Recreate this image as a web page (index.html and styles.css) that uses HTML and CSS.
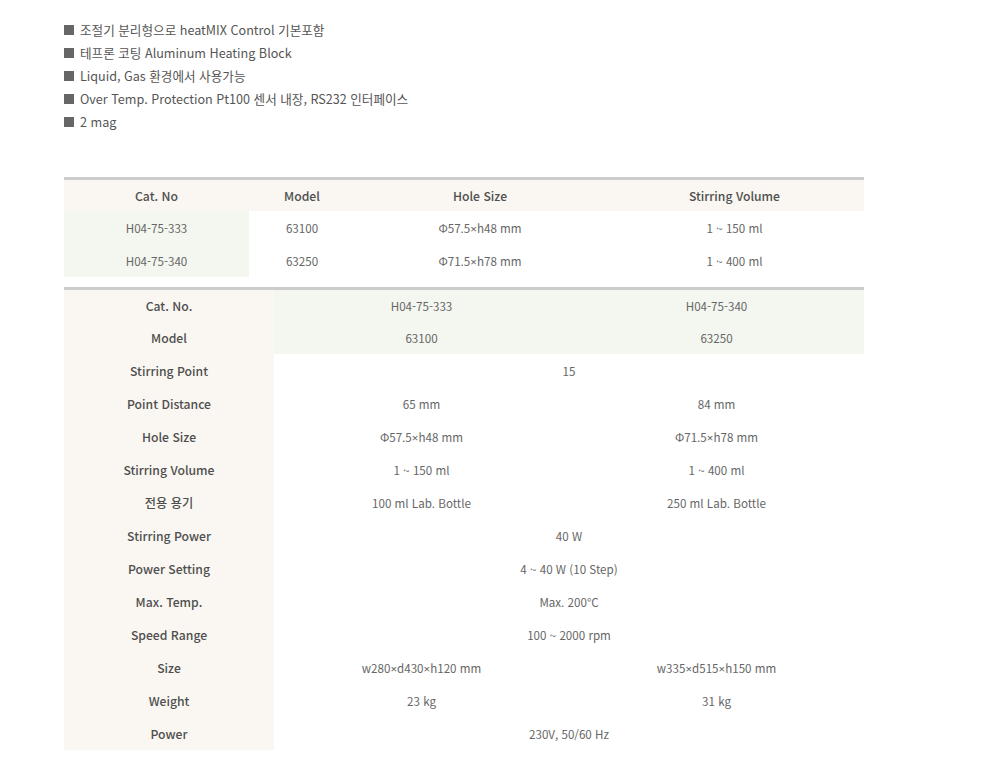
FILE: index.html
```html
<!DOCTYPE html>
<html lang="ko">
<head>
<meta charset="utf-8">
<title>heatMIX</title>
<link rel="stylesheet" href="styles.css">
</head>
<body>
<div class="page">
  <ul class="features">
    <li><span class="sq"></span>조절기 분리형으로 heatMIX Control 기본포함</li>
    <li><span class="sq"></span>테프론 코팅 Aluminum Heating Block</li>
    <li><span class="sq"></span>Liquid, Gas 환경에서 사용가능</li>
    <li><span class="sq"></span>Over Temp. Protection Pt100 센서 내장, RS232 인터페이스</li>
    <li><span class="sq"></span>2 mag</li>
  </ul>

  <table class="tbl t1">
    <colgroup>
      <col class="c1"><col class="c2"><col class="c3"><col class="c4">
    </colgroup>
    <thead>
      <tr class="first">
        <th>Cat. No</th><th>Model</th><th>Hole Size</th><th>Stirring Volume</th>
      </tr>
    </thead>
    <tbody>
      <tr><td class="green">H04-75-333</td><td>63100</td><td>Φ57.5<span class="x">×</span>h48 mm</td><td>1 ~ 150 ml</td></tr>
      <tr><td class="green">H04-75-340</td><td>63250</td><td>Φ71.5<span class="x">×</span>h78 mm</td><td>1 ~ 400 ml</td></tr>
    </tbody>
  </table>

  <table class="tbl t2">
    <colgroup>
      <col class="l"><col class="v"><col class="v">
    </colgroup>
    <tbody>
      <tr class="first"><th>Cat. No.</th><td class="green">H04-75-333</td><td class="green">H04-75-340</td></tr>
      <tr><th>Model</th><td class="green">63100</td><td class="green">63250</td></tr>
      <tr><th>Stirring Point</th><td colspan="2">15</td></tr>
      <tr><th>Point Distance</th><td>65 mm</td><td>84 mm</td></tr>
      <tr><th>Hole Size</th><td>Φ57.5<span class="x">×</span>h48 mm</td><td>Φ71.5<span class="x">×</span>h78 mm</td></tr>
      <tr><th>Stirring Volume</th><td>1 ~ 150 ml</td><td>1 ~ 400 ml</td></tr>
      <tr><th>전용 용기</th><td>100 ml Lab. Bottle</td><td>250 ml Lab. Bottle</td></tr>
      <tr><th>Stirring Power</th><td colspan="2">40 W</td></tr>
      <tr><th>Power Setting</th><td colspan="2">4 ~ 40 W (10 Step)</td></tr>
      <tr><th>Max. Temp.</th><td colspan="2">Max. 200°C</td></tr>
      <tr><th>Speed Range</th><td colspan="2">100 ~ 2000 rpm</td></tr>
      <tr><th>Size</th><td>w280<span class="x">×</span>d430<span class="x">×</span>h120 mm</td><td>w335<span class="x">×</span>d515<span class="x">×</span>h150 mm</td></tr>
      <tr><th>Weight</th><td>23 kg</td><td>31 kg</td></tr>
      <tr><th>Power</th><td colspan="2">230V, 50/60 Hz</td></tr>
    </tbody>
  </table>
</div>
</body>
</html>
```

FILE: styles.css
```css
html, body {
  margin: 0;
  padding: 0;
  background: #ffffff;
}

body {
  font-family: "Noto Sans CJK KR", "Noto Sans", sans-serif;
  color: #555555;
}

.page {
  padding: 18px 0 0 64px;
  width: 800px;
}

.features {
  list-style: none;
  margin: 0;
  padding: 0;
  font-size: 12.6px;
  line-height: 23px;
  color: #555555;
}

.features li {
  display: flex;
  align-items: center;
  white-space: nowrap;
}

.sq {
  display: inline-block;
  width: 10px;
  height: 10px;
  background: #666666;
  margin-right: 6px;
  flex: none;
}

.x {
  font-family: "Noto Sans", sans-serif;
}

.tbl {
  width: 800px;
  border-collapse: separate;
  border-spacing: 0;
  table-layout: fixed;
  border-top: 3px solid #cccccc;
  font-size: 11.6px;
}

.tbl th,
.tbl td {
  padding: 0;
  height: 33px;
  text-align: center;
  vertical-align: middle;
}

.tbl tr.first th,
.tbl tr.first td {
  height: 31px;
}

.tbl th {
  font-weight: 500;
  font-size: 12.2px;
  color: #4f4f4f;
  background: #faf7f2;
}

.tbl td {
  color: #666666;
  background: #ffffff;
}

.tbl td.green {
  background: #f4f6f0;
}

.t1 {
  margin-top: 44px;
}

.t1 .c1 { width: 185px; }
.t1 .c2 { width: 106px; }
.t1 .c3 { width: 250px; }
.t1 .c4 { width: 259px; }

.t2 {
  margin-top: 10px;
}

.t2 .l { width: 210px; }
.t2 .v { width: 295px; }
```
